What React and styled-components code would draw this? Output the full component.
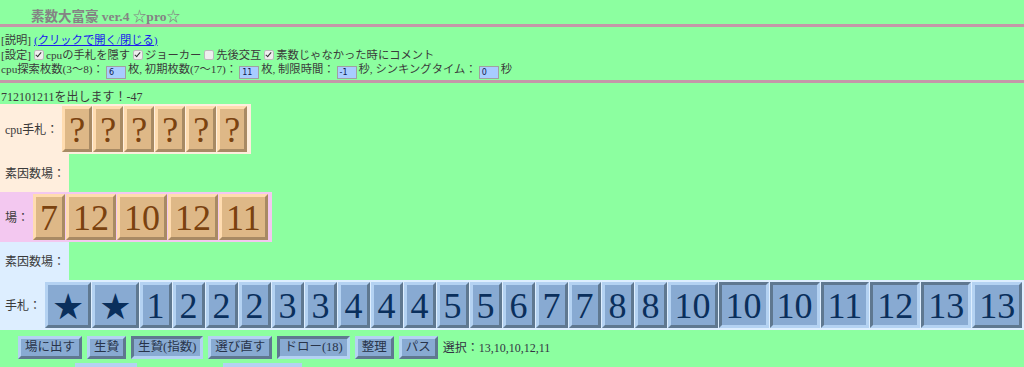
import React from "react";
import styled, { createGlobalStyle, css } from "styled-components";

const GlobalStyle = createGlobalStyle`
  body {
    margin: 0;
    background: #8cffa0;
    font-family: "Liberation Serif", "Noto Sans CJK JP", serif;
    color: #3a3a3a;
    font-size: 12px;
  }
`;

const cpuHand = ["?", "?", "?", "?", "?", "?"];
const field = ["7", "12", "10", "12", "11"];
const hand = [
  { v: "★" }, { v: "★" }, { v: "1" }, { v: "2" }, { v: "2" }, { v: "2" },
  { v: "3" }, { v: "3" }, { v: "4" }, { v: "4" }, { v: "4" }, { v: "5" },
  { v: "5" }, { v: "6" }, { v: "7" }, { v: "7" }, { v: "8" }, { v: "8" },
  { v: "10" }, { v: "10", sel: true }, { v: "10", sel: true },
  { v: "11", sel: true }, { v: "12", sel: true }, { v: "13", sel: true },
  { v: "13" },
];
const buttons = [
  { t: "場に出す" }, { t: "生贄" }, { t: "生贄(指数)", down: true },
  { t: "選び直す" }, { t: "ドロー(18)", down: true }, { t: "整理" }, { t: "パス" },
];

function App() {
  return (
    <Page>
      <GlobalStyle />
      <Title>素数大富豪 ver.4 ☆pro☆</Title>
      <Rule />
      <Settings>
        <Line>
          [説明] <Link href="#">(クリックで開く/閉じる)</Link>
        </Line>
        <Line>
          [設定] <Check checked />cpuの手札を隠す <Check checked />ジョーカー{" "}
          <Check />先後交互 <Check checked />素数じゃなかった時にコメント
        </Line>
        <Line>
          cpu探索枚数(3〜8)：<NumBox>6</NumBox>枚, 初期枚数(7〜17)：<NumBox>11</NumBox>枚,
          制限時間：<NumBox>-1</NumBox>秒, シンキングタイム：<NumBox>0</NumBox>秒
        </Line>
      </Settings>
      <Rule />
      <Message>712101211を出します！-47</Message>

      <Zone $bg="#ffeedd">
        <Label>cpu手札：</Label>
        {cpuHand.map((c, i) => (
          <Card key={i} $tone="wood">{c}</Card>
        ))}
      </Zone>
      <FactorZone $bg="#ffeedd">
        <Label>素因数場：</Label>
      </FactorZone>

      <Zone $bg="#f3c8f0">
        <Label>場：</Label>
        {field.map((c, i) => (
          <Card key={i} $tone="wood">{c}</Card>
        ))}
      </Zone>
      <FactorZone $bg="#ddeeff">
        <Label>素因数場：</Label>
      </FactorZone>

      <Zone $bg="#ddeeff">
        <Label>手札：</Label>
        {hand.map((c, i) => (
          <Card key={i} $tone="sky" $sel={c.sel} $star={c.v === "★"}>
            {c.v}
          </Card>
        ))}
      </Zone>

      <ButtonRow>
        {buttons.map((b) => (
          <Button key={b.t} $down={b.down}>{b.t}</Button>
        ))}
        <Selection>選択：13,10,10,12,11</Selection>
      </ButtonRow>
      <NextRow>
        <Stub $w={62} />
        <Stub $w={79} />
      </NextRow>
    </Page>
  );
}
export default App;

const Page = styled.div`
  padding: 0 1px;
`;
const Title = styled.div`
  padding: 9px 0 0 30px;
  height: 15px;
  font-size: 13.5px;
  font-weight: bold;
  color: #848484;
  line-height: 15px;
`;
const Rule = styled.div`
  height: 3px;
  background: #c497a8;
  margin: 0 -1px;
`;
const Settings = styled.div`
  padding: 6px 0 3px;
  font-size: 11.3px;
`;
const Line = styled.div`
  line-height: 14.5px;
  height: 14.5px;
  white-space: nowrap;
`;
const Link = styled.a`
  color: #1a1aee;
`;
const Check = styled.span`
  display: inline-block;
  width: 8px;
  height: 8px;
  border: 1px solid #bbb;
  background: #eee;
  border-radius: 2px;
  vertical-align: -1px;
  margin-right: 2px;
  position: relative;
  ${(p) =>
    p.checked &&
    css`
      &::after {
        content: "";
        position: absolute;
        left: 2px;
        top: 0px;
        width: 2px;
        height: 5px;
        border: solid #333;
        border-width: 0 1.5px 1.5px 0;
        transform: rotate(40deg);
      }
    `}
`;
const NumBox = styled.span`
  display: inline-block;
  width: 16px;
  height: 11px;
  padding-left: 2px;
  border: 1px solid #a0a0a0;
  background: #a8ccff;
  color: #102050;
  font-family: "DejaVu Sans", sans-serif;
  font-size: 8px;
  line-height: 11px;
  vertical-align: -2px;
  margin: 0 2px;
`;
const Message = styled.div`
  padding-top: 8px;
  line-height: 13px;
`;
const Zone = styled.div`
  display: flex;
  align-items: center;
  width: fit-content;
  background: ${(p) => p.$bg};
  margin-left: -1px;
  padding: 2px 3px 2px 0;
`;
const FactorZone = styled(Zone)`
  height: 34px;
  padding-right: 0;
`;
const Label = styled.span`
  padding: 0 4px 0 5px;
  white-space: nowrap;
`;
const tones = {
  wood: { bg: "#deb887", light: "#ffdcb0", dark: "#a88a64", fg: "#7a4210" },
  sky: { bg: "#88aad2", light: "#b4d2f2", dark: "#5f7890", fg: "#0a2f5c" },
};
const Card = styled.span`
  display: inline-block;
  height: 40px;
  line-height: 43px;
  padding: 0 4px;
  margin-right: 1px;
  font-size: 36px;
  font-family: ${(p) => (p.$star ? '"DejaVu Sans", sans-serif' : '"Liberation Serif", serif')};
  background: ${(p) => tones[p.$tone].bg};
  color: ${(p) => tones[p.$tone].fg};
  border: 3px solid;
  border-color: ${(p) => {
    const t = tones[p.$tone];
    return p.$sel
      ? `${t.dark} ${t.light} ${t.light} ${t.dark}`
      : `${t.light} ${t.dark} ${t.dark} ${t.light}`;
  }};
  text-align: center;
`;
const ButtonRow = styled.div`
  display: flex;
  align-items: center;
  gap: 5px;
  padding: 6px 0 0 17px;
`;
const Button = styled.span`
  height: 17px;
  line-height: 17px;
  padding: 0 4px;
  font-size: 12.5px;
  background: #88aad2;
  color: #28344a;
  border: 3px solid;
  border-color: ${(p) =>
    p.$down ? "#5f7890 #b4d2f2 #b4d2f2 #5f7890" : "#b4d2f2 #5f7890 #5f7890 #b4d2f2"};
`;
const Selection = styled.span`
  font-size: 12px;
  color: #334;
`;
const NextRow = styled.div`
  display: flex;
  gap: 86px;
  padding: 4px 0 0 74px;
`;
const Stub = styled.div`
  width: ${(p) => p.$w}px;
  height: 8px;
  background: #b4d2f2;
`;
